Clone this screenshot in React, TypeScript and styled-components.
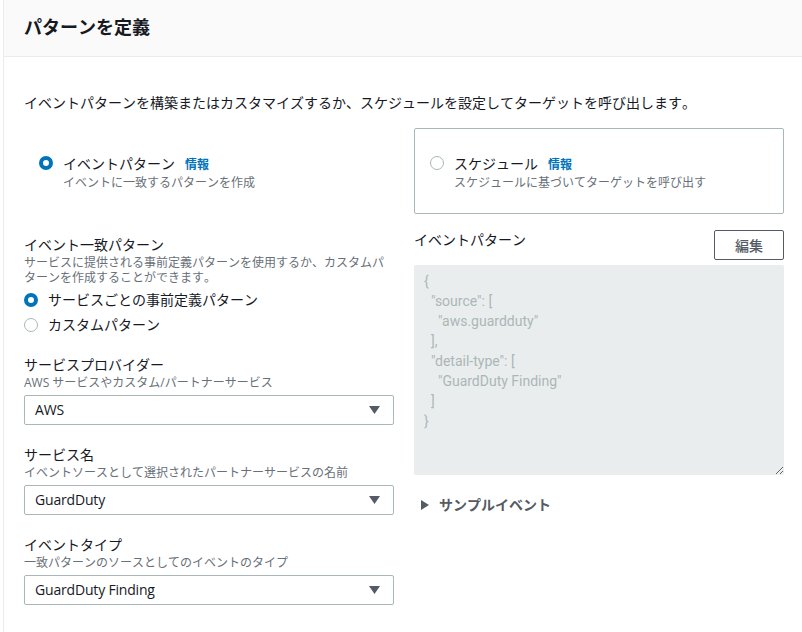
import React from 'react';
import styled, { createGlobalStyle } from 'styled-components';

const GlobalStyle = createGlobalStyle`
  html, body {
    margin: 0;
    padding: 0;
    background: #fff;
    overflow: hidden;
  }
  body {
    font-family: "Open Sans", "Noto Sans CJK JP", sans-serif;
    font-kerning: none;
    color: #16191f;
  }
`;

const patternText = `{
  "source": [
    "aws.guardduty"
  ],
  "detail-type": [
    "GuardDuty Finding"
  ]
}`;

function Caret() {
  return (
    <svg width="11" height="8" viewBox="0 0 11 8">
      <path d="M0 0h11L5.5 8z" fill="#545b64" />
    </svg>
  );
}

function Dropdown({ value }: { value: string }) {
  return (
    <SelectBox>
      <SelectValue>{value}</SelectValue>
      <Caret />
    </SelectBox>
  );
}

function App() {
  return (
    <>
      <GlobalStyle />
      <Panel>
        <Header>
          <Title>パターンを定義</Title>
        </Header>
        <Body>
          <Intro>イベントパターンを構築またはカスタマイズするか、スケジュールを設定してターゲットを呼び出します。</Intro>
          <Cards>
            <Card>
              <Radio $checked />
              <CardText>
                <CardTitle>
                  イベントパターン<InfoLink>情報</InfoLink>
                </CardTitle>
                <Hint>イベントに一致するパターンを作成</Hint>
              </CardText>
            </Card>
            <Card $bordered>
              <Radio />
              <CardText>
                <CardTitle>
                  スケジュール<InfoLink>情報</InfoLink>
                </CardTitle>
                <Hint>スケジュールに基づいてターゲットを呼び出す</Hint>
              </CardText>
            </Card>
          </Cards>
          <Columns>
            <LeftColumn>
              <Field>
                <Label>イベント一致パターン</Label>
                <Hint>サービスに提供される事前定義パターンを使用するか、カスタムパターンを作成することができます。</Hint>
                <RadioGroup>
                  <RadioRow>
                    <Radio $checked />
                    サービスごとの事前定義パターン
                  </RadioRow>
                  <RadioRow>
                    <Radio />
                    カスタムパターン
                  </RadioRow>
                </RadioGroup>
              </Field>
              <Field>
                <Label>サービスプロバイダー</Label>
                <Hint>AWS サービスやカスタム/パートナーサービス</Hint>
                <Dropdown value="AWS" />
              </Field>
              <Field>
                <Label>サービス名</Label>
                <Hint>イベントソースとして選択されたパートナーサービスの名前</Hint>
                <Dropdown value="GuardDuty" />
              </Field>
              <Field>
                <Label>イベントタイプ</Label>
                <Hint>一致パターンのソースとしてのイベントのタイプ</Hint>
                <Dropdown value="GuardDuty Finding" />
              </Field>
            </LeftColumn>
            <RightColumn>
              <PatternHead>
                <PatternLabel>イベントパターン</PatternLabel>
                <EditButton>編集</EditButton>
              </PatternHead>
              <PatternArea readOnly value={patternText} />
              <Sample>
                <svg width="8" height="10" viewBox="0 0 8 10">
                  <path d="M0 0l8 5-8 5z" fill="#545b64" />
                </svg>
                サンプルイベント
              </Sample>
            </RightColumn>
          </Columns>
        </Body>
      </Panel>
    </>
  );
}
export default App;

const Panel = styled.div`
  width: 802px;
  height: 632px;
  box-sizing: border-box;
  border-left: 1px solid #eaeded;
  margin-left: 3px;
  overflow: hidden;
`;
const Header = styled.div`
  height: 57px;
  box-sizing: border-box;
  background-color: #fafafa;
  border-bottom: 1px solid #eaeded;
  padding: 15px 20px 0;
`;
const Title = styled.h2`
  margin: 0;
  font-size: 18px;
  line-height: 24px;
  font-weight: 700;
`;
const Body = styled.div`
  padding: 0 20px;
  width: 760px;
  box-sizing: content-box;
`;
const Intro = styled.p`
  margin: 36px 0 0;
  font-size: 14px;
  line-height: 20px;
  white-space: nowrap;
`;
const Cards = styled.div`
  display: grid;
  grid-template-columns: 370px 370px;
  column-gap: 20px;
  margin-top: 15px;
`;
const Card = styled.div<{ $bordered?: boolean }>`
  height: 86px;
  box-sizing: border-box;
  border: 1px solid ${(p) => (p.$bordered ? '#aab7b8' : 'transparent')};
  border-radius: 2px;
  padding: 25px 15px 0 ${(p) => (p.$bordered ? '15px' : '14px')};
  display: flex;
  align-items: flex-start;
  gap: 10px;
`;
const Radio = styled.span<{ $checked?: boolean }>`
  flex: none;
  width: 14px;
  height: 14px;
  box-sizing: border-box;
  border-radius: 50%;
  margin-top: 2px;
  background: #fff;
  border: ${(p) => (p.$checked ? '4px solid #0073bb' : '1px solid #aab7b8')};
`;
const CardText = styled.div`
  display: flex;
  flex-direction: column;
`;
const CardTitle = styled.div`
  font-size: 14px;
  line-height: 20px;
`;
const InfoLink = styled.a`
  margin-left: 10px;
  font-size: 12px;
  font-weight: 700;
  color: #0073bb;
`;
const Hint = styled.div`
  font-size: 12px;
  line-height: 15px;
  color: #687078;
`;
const Columns = styled.div`
  display: grid;
  grid-template-columns: 370px 370px;
  column-gap: 20px;
`;
const LeftColumn = styled.div`
  display: flex;
  flex-direction: column;
  gap: 20px;
  padding-top: 21px;
`;
const Field = styled.div`
  display: flex;
  flex-direction: column;
`;
const Label = styled.div`
  font-size: 14px;
  line-height: 20px;
`;
const RadioGroup = styled.div`
  display: flex;
  flex-direction: column;
  gap: 5px;
  margin-top: 5px;
`;
const RadioRow = styled.div`
  display: flex;
  align-items: center;
  gap: 10px;
  font-size: 14px;
  line-height: 20px;
  & > span {
    margin-top: 0;
  }
`;
const SelectBox = styled.div`
  height: 30px;
  box-sizing: border-box;
  margin-top: 5px;
  border: 1px solid #aab7b8;
  border-radius: 2px;
  padding: 0 13px 0 10px;
  display: flex;
  align-items: center;
  justify-content: space-between;
  font-size: 14px;
`;
const SelectValue = styled.span`
  padding-bottom: 2px;
  letter-spacing: -0.18px;
`;
const RightColumn = styled.div`
  display: flex;
  flex-direction: column;
  padding-top: 16px;
`;
const PatternHead = styled.div`
  display: flex;
  justify-content: space-between;
  align-items: flex-start;
`;
const PatternLabel = styled.div`
  font-size: 14px;
  line-height: 20px;
`;
const EditButton = styled.button`
  width: 70px;
  height: 30px;
  box-sizing: border-box;
  background: #fff;
  border: 1px solid #545b64;
  border-radius: 2px;
  color: #545b64;
  font: 500 14px "Open Sans", "Noto Sans CJK JP", sans-serif;
`;
const PatternArea = styled.textarea`
  display: block;
  width: 370px;
  height: 210px;
  box-sizing: border-box;
  margin-top: 5px;
  padding: 6px 10px;
  border: none;
  border-radius: 2px;
  outline: none;
  background: #eaeded;
  color: #aab7b8;
  font: 14px/20px "Roboto", "Noto Sans CJK JP", sans-serif;
`;
const Sample = styled.div`
  display: flex;
  align-items: center;
  gap: 10px;
  margin: 20px 0 0 7px;
  font-size: 14px;
  line-height: 20px;
  font-weight: 700;
  color: #545b64;
`;
